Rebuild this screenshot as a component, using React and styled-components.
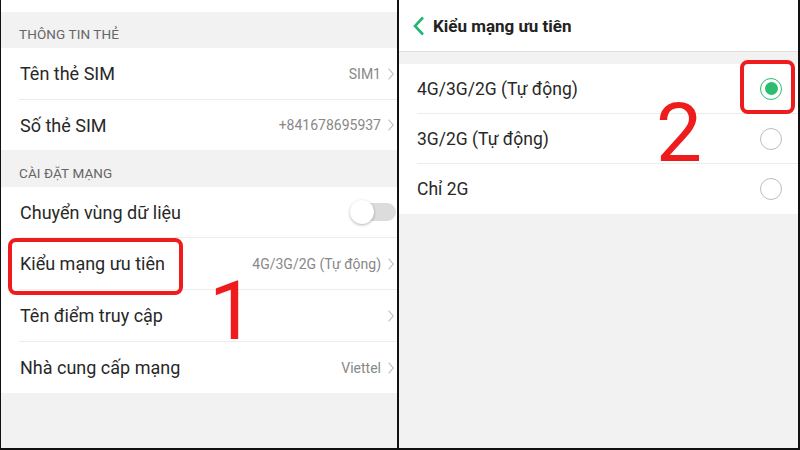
import React from "react";
import styled, { createGlobalStyle } from "styled-components";

const Global = createGlobalStyle`
  html, body { margin: 0; padding: 0; background: #fff; }
  body { font-family: Roboto, "Noto Sans", "Liberation Sans", sans-serif; }
  * { box-sizing: border-box; }
`;

const Frame = styled.div`
  width: 800px;
  height: 450px;
  display: flex;
  border-left: 1px solid #111;
  border-right: 2px solid #111;
  border-bottom: 2px solid #111;
  background: #f2f2f2;
  overflow: hidden;
`;

const Panel = styled.div`
  position: relative;
  width: ${(p) => p.$w}px;
  flex: ${(p) => (p.$w ? "none" : "1")};
  display: flex;
  flex-direction: column;
  background: #f2f2f2;
`;

const Divider = styled.div`
  width: 2px;
  background: #111;
  flex: none;
`;

const TopStrip = styled.div`
  height: 12px;
  background: #fff;
`;

const SectionLabel = styled.div`
  height: ${(p) => p.$h}px;
  padding: 0 0 6px 18px;
  display: flex;
  align-items: flex-end;
  font-size: 13.5px;
  color: #666;
  letter-spacing: 0.1px;
`;

const List = styled.div`
  background: #fff;
  display: flex;
  flex-direction: column;
`;

const Row = styled.div`
  position: relative;
  height: ${(p) => p.$h || 51}px;
  margin-left: 18px;
  padding-right: 3px;
  display: flex;
  align-items: center;
  border-bottom: ${(p) => (p.$last ? "none" : "1px solid #ececec")};
`;

const Label = styled.div`
  flex: 1;
  font-size: 18px;
  color: #282828;
  padding-left: 1px;
`;

const Value = styled.div`
  font-size: 14px;
  color: #888;
  margin-right: 7px;
`;

const Chevron = () => (
  <svg width="6" height="12" viewBox="0 0 6 12">
    <path d="M0.6 0.6 L5.3 6 L0.6 11.4" fill="none" stroke="#c4c4c4" strokeWidth="1.2" />
  </svg>
);

const Toggle = styled.div`
  position: relative;
  width: 40px;
  height: 18px;
  border-radius: 9px;
  background: #dcdcdc;
  margin-right: -2px;
  &::after {
    content: "";
    position: absolute;
    left: -6px;
    top: -3px;
    width: 24px;
    height: 24px;
    border-radius: 50%;
    background: #fff;
    box-shadow: 0 1px 3px rgba(0, 0, 0, 0.3);
  }
`;

const Header = styled.div`
  height: 52px;
  background: #fff;
  border-bottom: 1px solid #dedede;
  display: flex;
  align-items: center;
  padding-left: 14px;
  gap: 8px;
`;

const Title = styled.div`
  font-size: 17px;
  font-weight: 700;
  color: #222;
`;

const Gap = styled.div`
  height: 12px;
`;

const OptionRow = styled.div`
  height: 50px;
  margin-left: 18px;
  padding-right: 16px;
  display: flex;
  align-items: center;
  border-bottom: ${(p) => (p.$last ? "none" : "1px solid #ececec")};
`;

const OptionLabel = styled.div`
  flex: 1;
  font-size: 17.5px;
  color: #282828;
`;

const Radio = styled.div`
  width: 22px;
  height: 22px;
  border-radius: 50%;
  border: 1.5px solid ${(p) => (p.$on ? "#2dbd6e" : "#bdbdbd")};
  display: flex;
  align-items: center;
  justify-content: center;
  &::after {
    content: "";
    display: ${(p) => (p.$on ? "block" : "none")};
    width: 13px;
    height: 13px;
    border-radius: 50%;
    background: #2dbd6e;
  }
`;

const RedBox = styled.div`
  position: absolute;
  left: ${(p) => p.$x}px;
  top: ${(p) => p.$y}px;
  width: ${(p) => p.$w}px;
  height: ${(p) => p.$h}px;
  border: 4px solid #ee1c1c;
  border-radius: 8px;
  pointer-events: none;
`;

const Step = styled.div`
  position: absolute;
  left: ${(p) => p.$x}px;
  top: ${(p) => p.$y}px;
  font-family: Roboto, "Liberation Sans", sans-serif;
  font-size: 82px;
  font-weight: 400;
  line-height: 1;
  color: #ee1c1c;
`;

const BackIcon = () => (
  <svg width="12" height="20" viewBox="0 0 12 20">
    <path d="M10 1.5 L2 10 L10 18.5" fill="none" stroke="#22b573" strokeWidth="2.6" />
  </svg>
);

export default function App() {
  return (
    <>
      <Global />
      <Frame>
        <Panel $w={396}>
          <TopStrip />
          <SectionLabel $h={36}>THÔNG TIN THẺ</SectionLabel>
          <List>
            <Row $h={52}>
              <Label>Tên thẻ SIM</Label>
              <Value>SIM1</Value>
              <Chevron />
            </Row>
            <Row $h={50} $last>
              <Label>Số thẻ SIM</Label>
              <Value>+841678695937</Value>
              <Chevron />
            </Row>
          </List>
          <SectionLabel $h={37}>CÀI ĐẶT MẠNG</SectionLabel>
          <List>
            <Row $h={51}>
              <Label>Chuyển vùng dữ liệu</Label>
              <Toggle />
            </Row>
            <Row $h={52}>
              <Label>Kiểu mạng ưu tiên</Label>
              <Value>4G/3G/2G (Tự động)</Value>
              <Chevron />
            </Row>
            <Row $h={52}>
              <Label>Tên điểm truy cập</Label>
              <Chevron />
            </Row>
            <Row $h={51} $last>
              <Label>Nhà cung cấp mạng</Label>
              <Value>Viettel</Value>
              <Chevron />
            </Row>
          </List>
          <RedBox $x={7} $y={238} $w={175} $h={57} />
          <Step $x={208} $y={270}>1</Step>
        </Panel>
        <Divider />
        <Panel>
          <Header>
            <BackIcon />
            <Title>Kiểu mạng ưu tiên</Title>
          </Header>
          <Gap />
          <List>
            <OptionRow>
              <OptionLabel>4G/3G/2G (Tự động)</OptionLabel>
              <Radio $on />
            </OptionRow>
            <OptionRow>
              <OptionLabel>3G/2G (Tự động)</OptionLabel>
              <Radio />
            </OptionRow>
            <OptionRow $last>
              <OptionLabel>Chỉ 2G</OptionLabel>
              <Radio />
            </OptionRow>
          </List>
          <RedBox $x={341} $y={60} $w={55} $h={54} />
          <Step $x={257} $y={92}>2</Step>
        </Panel>
      </Frame>
    </>
  );
}
